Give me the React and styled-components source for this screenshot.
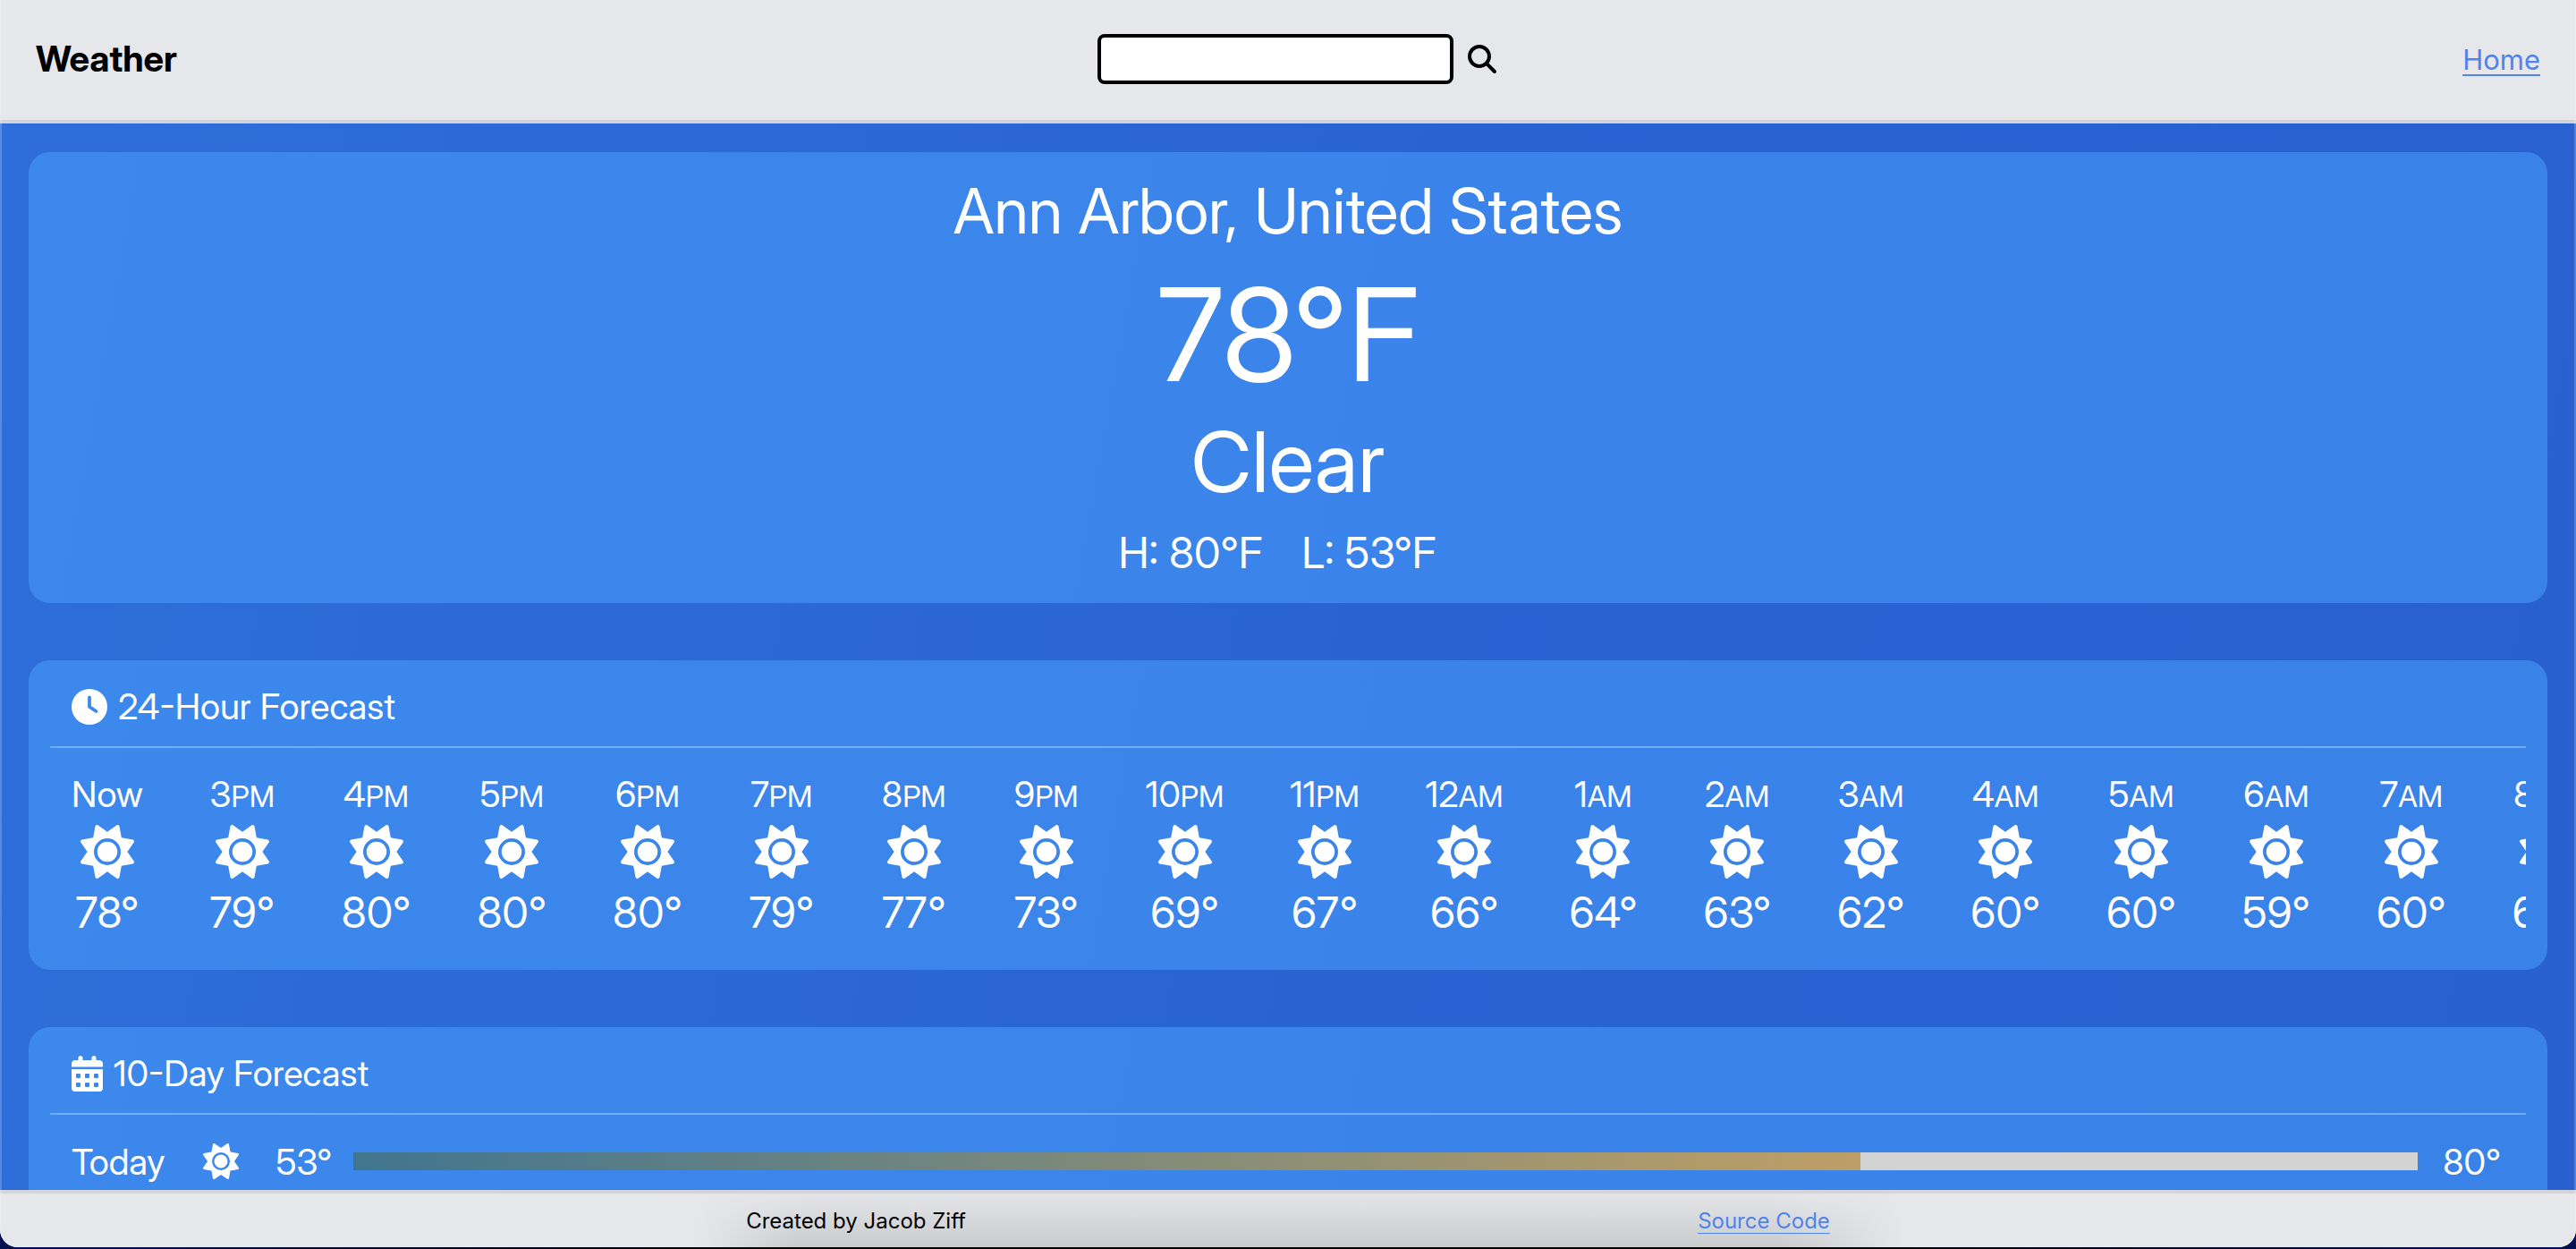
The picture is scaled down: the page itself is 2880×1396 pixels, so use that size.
import React from "react";
import styled, { createGlobalStyle } from "styled-components";
import { FaClock, FaMagnifyingGlass } from "react-icons/fa6";

const GlobalStyle = createGlobalStyle`
  *, *::before, *::after { box-sizing: border-box; }
  html, body, #root { height: 100%; }
  body {
    margin: 0;
    overflow: hidden;
    background: #020c45;
    font-family: "Inter Display", Inter, "Liberation Sans", sans-serif;
    font-weight: 400;
  }
  h1, h2, p, ol { margin: 0; padding: 0; font-weight: inherit; list-style: none; }
`;

const Frame = styled.div`
  height: 100%;
  padding-bottom: 2px;
  background: linear-gradient(90deg, #020f52, #000 30%, #000 70%, #020f52);
`;

const Page = styled.div`
  position: relative;
  display: flex;
  flex-direction: column;
  height: 100%;
  overflow: hidden;
  border-radius: 0 0 20px 20px;
  background: linear-gradient(100deg, #2f6eda 0%, #2963d2 55%, #2860d0 100%);

  &::after {
    content: "";
    position: absolute;
    inset: 0;
    border: solid rgba(255, 255, 255, 0.2);
    border-width: 0 2px;
    border-radius: inherit;
    pointer-events: none;
  }
`;

const Header = styled.header`
  display: grid;
  grid-template-columns: 1fr auto 1fr;
  align-items: center;
  flex: none;
  height: 138px;
  padding: 0 40px 2px;
  border-bottom: 4px solid #d1d5db;
  background: #e5e7eb;
`;

const Brand = styled.h1`
  font-size: 40px;
  line-height: 56px;
  font-weight: 700;
  color: #000;
`;

const SearchForm = styled.form`
  display: flex;
  align-items: center;
  gap: 16px;
  padding-left: 20px;
`;

const SearchInput = styled.input`
  width: 398px;
  height: 56px;
  padding: 0 12px;
  border: 4px solid #000;
  border-radius: 8px;
  background: #fff;
  font: inherit;
  font-size: 32px;
`;

const SearchButton = styled.button`
  display: flex;
  padding: 0;
  border: 0;
  background: none;
  color: #000;
  font-size: 32px;
`;

const TextLink = styled.a`
  justify-self: end;
  color: #4f83ee;
  font-family: Inter, "Liberation Sans", sans-serif;
  font-size: ${({ $size }) => $size}px;
  text-decoration-thickness: ${({ $line }) => $line}px;
  text-underline-offset: 5px;
`;

const Main = styled.main`
  display: flex;
  flex: 1;
  flex-direction: column;
  gap: 64px;
  min-height: 0;
  padding: 32px;
  overflow: hidden;
`;

const Card = styled.section`
  flex: none;
  padding: 24px;
  border-radius: 24px;
  background: linear-gradient(100deg, #3c88ec, #3a83ea 60%, #3982e8);
  color: #fff;
`;

const Current = styled(Card)`
  display: flex;
  flex-direction: column;
  align-items: center;
  height: 504px;
`;

const Place = styled.h2`
  font-size: 70px;
  line-height: 84px;
`;

const Temperature = styled.p`
  margin-top: 12px;
  font-size: 144px;
  line-height: 168px;
`;

const Condition = styled.p`
  font-size: 94px;
  line-height: 116px;
`;

const Range = styled.p`
  display: flex;
  gap: 44px;
  margin-top: 16px;
  padding-right: 24px;
  font-size: 48px;
  line-height: 56px;
`;

const CardTitle = styled.h2`
  display: flex;
  align-items: center;
  gap: 12px;
  height: 74px;
  padding: 0 24px 16px;
  border-bottom: 2px solid #74aef2;
  font-size: 40px;
  line-height: 56px;

  svg { width: auto; height: 40px; }
`;

const Hours = styled.ol`
  display: flex;
  gap: 74px;
  padding: 24px 24px 8px;
  overflow: hidden;
`;

const Hour = styled.li`
  display: flex;
  flex: none;
  flex-direction: column;
  align-items: center;
  min-width: 74px;
  font-size: 40px;
  line-height: 56px;

  small { font-size: 33px; line-height: 0; }
  svg { margin: 6px 0; height: 60px; }
`;

const Degrees = styled.span`
  font-size: 48px;
  line-height: 64px;
`;

const Day = styled.div`
  display: flex;
  align-items: center;
  height: 56px;
  margin-top: 24px;
  padding: 0 28px 0 24px;
  font-size: 40px;

  svg { margin: 0 42px; height: 40px; }
`;

const Track = styled.div`
  flex: 1;
  height: 20px;
  margin: 0 28px 0 24px;
  background: #d3d3d3;
`;

const Fill = styled.div`
  height: 100%;
  background: linear-gradient(90deg, #41758f, #bd9f66);
`;

const Footer = styled.footer`
  display: flex;
  flex: none;
  align-items: center;
  justify-content: space-evenly;
  height: 64px;
  padding: 0 16px;
  border-top: 4px solid #d3d5db;
  background:
    linear-gradient(90deg, #e5e7eb 27%, transparent 31%, transparent 69%, #e5e7eb 74%),
    linear-gradient(180deg, #e4e5e8, #cacbcd);
  color: #000;
  font-family: Inter, "Liberation Sans", sans-serif;
  font-size: 24px;
`;

function SunIcon() {
  return (
    <svg viewBox="0 0 512 512" fill="currentColor" aria-hidden="true">
      <path d="M361.5 1.2c5 2.1 8.6 6.6 9.6 11.9L391 121l107.9 19.8c5.3 1 9.8 4.6 11.9 9.6s1.5 10.7-1.6 15.2L446.9 256l62.3 90.3c3.1 4.5 3.7 10.2 1.6 15.2s-6.6 8.6-11.9 9.6L391 391 371.1 498.9c-1 5.3-4.6 9.8-9.6 11.9s-10.7 1.5-15.2-1.6L256 446.9l-90.3 62.3c-4.5 3.1-10.2 3.7-15.2 1.6s-8.6-6.6-9.6-11.9L121 391 13.1 371.1c-5.3-1-9.8-4.6-11.9-9.6s-1.5-10.7 1.6-15.2L65.1 256 2.8 165.7c-3.1-4.5-3.7-10.2-1.6-15.2s6.6-8.6 11.9-9.6L121 121 140.9 13.1c1-5.3 4.6-9.8 9.6-11.9s10.7-1.5 15.2 1.6L256 65.1 346.3 2.8c4.5-3.1 10.2-3.7 15.2-1.6zM160 256a96 96 0 1 1 192 0 96 96 0 1 1 -192 0zm224 0a128 128 0 1 0 -256 0 128 128 0 1 0 256 0z" />
    </svg>
  );
}

function CalendarIcon() {
  return (
    <svg viewBox="0 0 448 512" fill="currentColor" aria-hidden="true">
      <path d="M128 0c17.7 0 32 14.3 32 32V64H288V32c0-17.7 14.3-32 32-32s32 14.3 32 32V64h48c26.5 0 48 21.5 48 48v48H0V112C0 85.5 21.5 64 48 64H96V32c0-17.7 14.3-32 32-32zM0 192H448V464c0 26.5-21.5 48-48 48H48c-26.5 0-48-21.5-48-48V192zm64 80v32c0 8.8 7.2 16 16 16h32c8.8 0 16-7.2 16-16V272c0-8.8-7.2-16-16-16H80c-8.8 0-16 7.2-16 16zm128 0v32c0 8.8 7.2 16 16 16h32c8.8 0 16-7.2 16-16V272c0-8.8-7.2-16-16-16H208c-8.8 0-16 7.2-16 16zm144-16c-8.8 0-16 7.2-16 16v32c0 8.8 7.2 16 16 16h32c8.8 0 16-7.2 16-16V272c0-8.8-7.2-16-16-16H336zM64 400v32c0 8.8 7.2 16 16 16h32c8.8 0 16-7.2 16-16V400c0-8.8-7.2-16-16-16H80c-8.8 0-16 7.2-16 16zm144-16c-8.8 0-16 7.2-16 16v32c0 8.8 7.2 16 16 16h32c8.8 0 16-7.2 16-16V400c0-8.8-7.2-16-16-16H208zm112 16v32c0 8.8 7.2 16 16 16h32c8.8 0 16-7.2 16-16V400c0-8.8-7.2-16-16-16H336c-8.8 0-16 7.2-16 16z" />
    </svg>
  );
}

const hours = [
  ["Now", "", 78], ["3", "PM", 79], ["4", "PM", 80], ["5", "PM", 80], ["6", "PM", 80],
  ["7", "PM", 79], ["8", "PM", 77], ["9", "PM", 73], ["10", "PM", 69], ["11", "PM", 67],
  ["12", "AM", 66], ["1", "AM", 64], ["2", "AM", 63], ["3", "AM", 62], ["4", "AM", 60],
  ["5", "AM", 60], ["6", "AM", 59], ["7", "AM", 60], ["8", "AM", 64],
];

export default function App() {
  return (
    <>
      <GlobalStyle />
      <Frame>
        <Page>
          <Header>
            <Brand>Weather</Brand>
            <SearchForm role="search" onSubmit={(event) => event.preventDefault()}>
              <SearchInput type="text" aria-label="City" />
              <SearchButton type="submit" aria-label="Search">
                <FaMagnifyingGlass />
              </SearchButton>
            </SearchForm>
            <TextLink href="#home" $size={31} $line={2}>Home</TextLink>
          </Header>
          <Main>
            <Current>
              <Place>Ann Arbor, United States</Place>
              <Temperature>78°F</Temperature>
              <Condition>Clear</Condition>
              <Range>
                <span>H: 80°F</span>
                <span>L: 53°F</span>
              </Range>
            </Current>
            <Card>
              <CardTitle><FaClock />24-Hour Forecast</CardTitle>
              <Hours>
                {hours.map(([hour, period, degrees]) => (
                  <Hour key={hour + period}>
                    <span>{hour}{period && <small>{period}</small>}</span>
                    <SunIcon />
                    <Degrees>{degrees}°</Degrees>
                  </Hour>
                ))}
              </Hours>
            </Card>
            <Card>
              <CardTitle><CalendarIcon />10-Day Forecast</CardTitle>
              <Day>
                <span>Today</span>
                <SunIcon />
                <span>53°</span>
                <Track><Fill style={{ width: "73%" }} /></Track>
                <span>80°</span>
              </Day>
            </Card>
          </Main>
          <Footer>
            <span>Created by Jacob Ziff</span>
            <TextLink href="#source" $size={24} $line={1}>Source Code</TextLink>
          </Footer>
        </Page>
      </Frame>
    </>
  );
}
